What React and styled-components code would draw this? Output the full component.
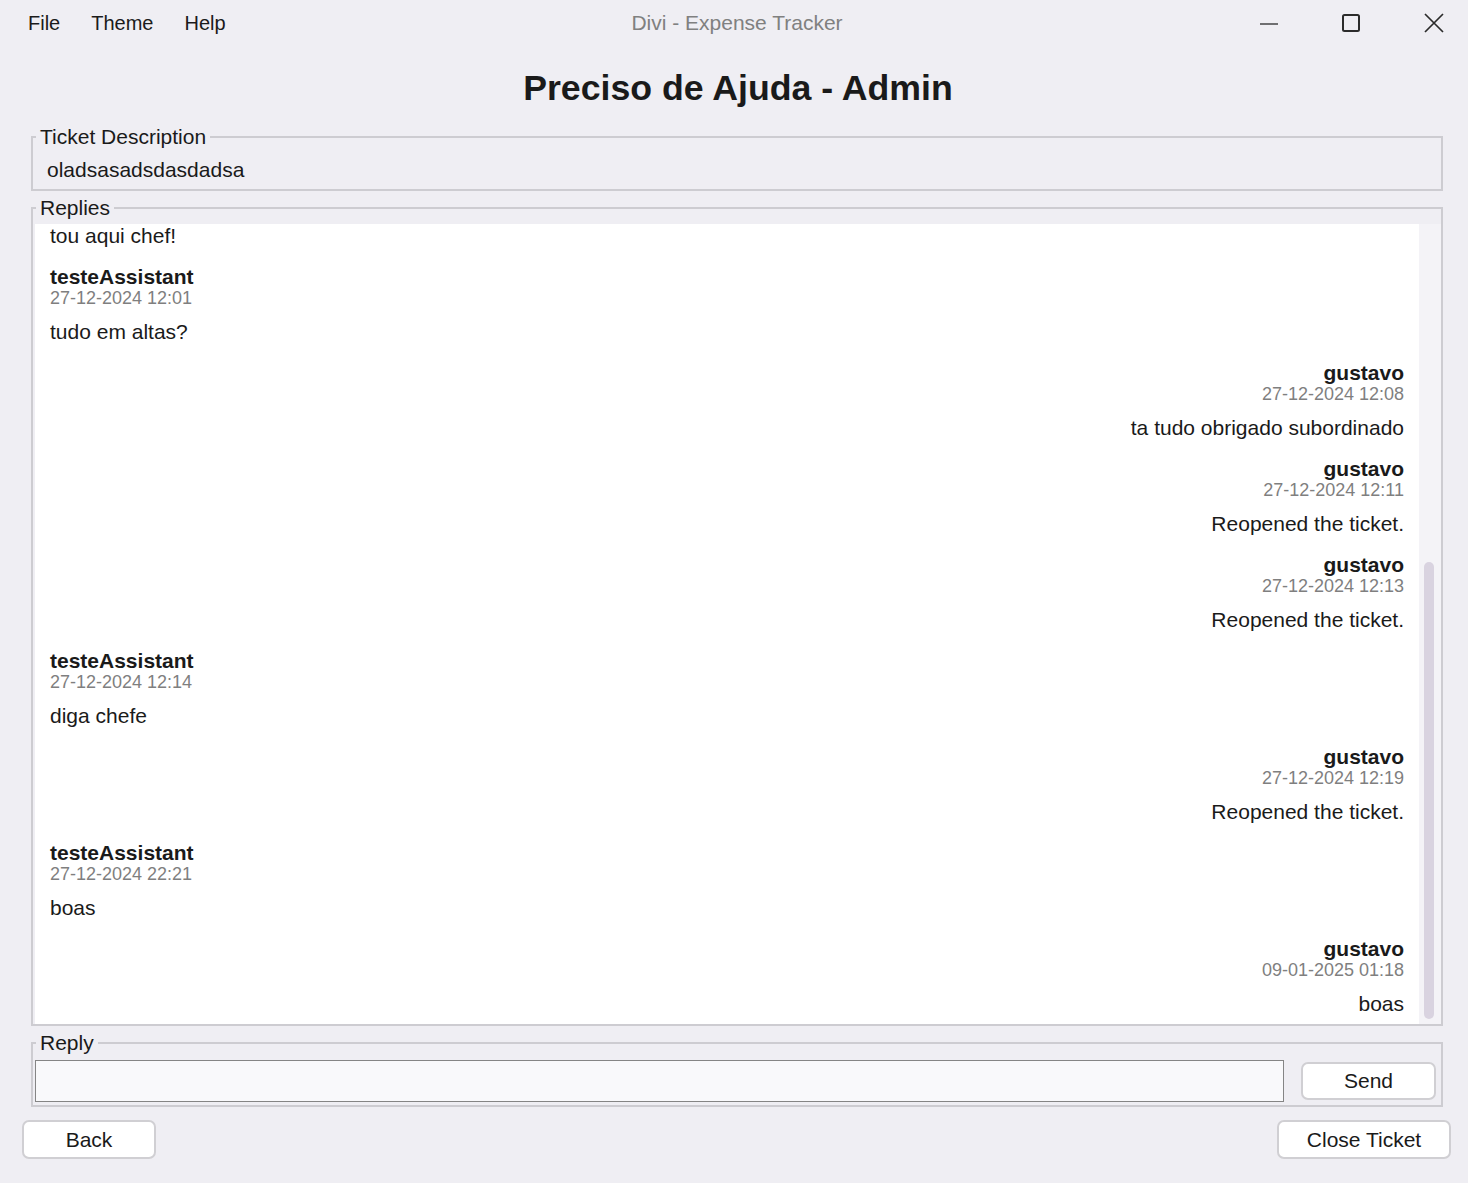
import React from 'react';
import styled, { createGlobalStyle } from 'styled-components';

const GlobalStyle = createGlobalStyle`
  html, body {
    margin: 0;
    padding: 0;
    background: #efeef3;
    font-family: "Liberation Sans", Arial, sans-serif;
    color: #1a1a1a;
  }
`;

const Window = styled.div`
  width: 1468px;
  height: 1183px;
  display: flex;
  flex-direction: column;
  background: #efeef3;
`;

const TitleBar = styled.div`
  height: 46px;
  display: grid;
  grid-template-columns: 1fr auto 1fr;
  align-items: center;
`;

const Menu = styled.div`
  display: flex;
  gap: 31px;
  padding-left: 28px;
  font-size: 20px;
`;

const MenuItem = styled.span`
  color: #1b1b1b;
`;

const WindowTitle = styled.div`
  font-size: 21px;
  color: #808080;
  padding-left: 6px;
`;

const Controls = styled.div`
  display: flex;
  justify-content: flex-end;
  align-items: center;
  gap: 64px;
  padding-right: 24px;
`;

const Heading = styled.h1`
  margin: 22px 0 17px;
  font-size: 35.7px;
  line-height: 40px;
  font-weight: bold;
  text-align: center;
  color: #1a1a1a;
  padding-left: 8px;
`;

const Group = styled.fieldset`
  margin: 0 25px 5px 31px;
  border: 2px solid #cdccd1;
  padding: ${p => p.$pad};
  min-width: 0;
`;

const Legend = styled.legend`
  font-size: 21px;
  line-height: 24px;
  padding: 0 4px;
  margin-left: 1px;
  color: #1a1a1a;
`;

const Description = styled.div`
  font-size: 21px;
  line-height: 24px;
  padding-left: 12px;
`;

const RepliesBody = styled.div`
  display: flex;
  height: 800px;
`;

const List = styled.div`
  flex: 1;
  background: #ffffff;
  padding: 0 15px;
  overflow: hidden;
`;

const Track = styled.div`
  width: 22px;
  background: #f4f3f7;
  display: flex;
  flex-direction: column;
`;

const Thumb = styled.div`
  margin: 338px 0 0 5px;
  width: 10px;
  height: 457px;
  border-radius: 5px;
  background: #d9d3e0;
`;

const Entry = styled.div`
  display: flex;
  flex-direction: column;
  align-items: ${p => (p.$side === 'right' ? 'flex-end' : 'flex-start')};
  text-align: ${p => p.$side};
  padding-bottom: 17px;
`;

const Author = styled.div`
  font-size: 21px;
  line-height: 24px;
  font-weight: bold;
`;

const Stamp = styled.div`
  font-size: 18px;
  line-height: 18px;
  color: #7f7f7f;
`;

const Text = styled.div`
  font-size: 21px;
  line-height: 24px;
  margin-top: ${p => (p.$partial ? '0' : '13px')};
`;

const ReplyRow = styled.div`
  display: flex;
  align-items: center;
  gap: 17px;
`;

const Input = styled.input`
  flex: 1;
  height: 42px;
  box-sizing: border-box;
  border: 1px solid #858585;
  background: #f9f9fb;
  font-family: inherit;
  font-size: 21px;
  padding: 0 8px;
  outline: none;
`;

const Button = styled.button`
  width: ${p => p.$w}px;
  height: ${p => p.$h}px;
  box-sizing: border-box;
  background: #ffffff;
  border: 2px solid #d0cfd3;
  border-radius: 7px;
  font-family: inherit;
  font-size: 21px;
  color: #1a1a1a;
  padding: 0;
`;

const Footer = styled.div`
  display: flex;
  justify-content: space-between;
  padding: 8px 17px 0 22px;
`;

const replies = [
  { side: 'left', text: 'tou aqui chef!', partial: true },
  { side: 'left', name: 'testeAssistant', date: '27-12-2024 12:01', text: 'tudo em altas?' },
  { side: 'right', name: 'gustavo', date: '27-12-2024 12:08', text: 'ta tudo obrigado subordinado' },
  { side: 'right', name: 'gustavo', date: '27-12-2024 12:11', text: 'Reopened the ticket.' },
  { side: 'right', name: 'gustavo', date: '27-12-2024 12:13', text: 'Reopened the ticket.' },
  { side: 'left', name: 'testeAssistant', date: '27-12-2024 12:14', text: 'diga chefe' },
  { side: 'right', name: 'gustavo', date: '27-12-2024 12:19', text: 'Reopened the ticket.' },
  { side: 'left', name: 'testeAssistant', date: '27-12-2024 22:21', text: 'boas' },
  { side: 'right', name: 'gustavo', date: '09-01-2025 01:18', text: 'boas' },
];

const App = () => {
  return (
    <>
      <GlobalStyle />
      <Window>
        <TitleBar>
          <Menu>
            <MenuItem>File</MenuItem>
            <MenuItem>Theme</MenuItem>
            <MenuItem>Help</MenuItem>
          </Menu>
          <WindowTitle>Divi - Expense Tracker</WindowTitle>
          <Controls>
            <svg width="18" height="20" viewBox="0 0 18 20">
              <line x1="0" y1="11" x2="18" y2="11" stroke="#2b2b2b" strokeWidth="1.3" />
            </svg>
            <svg width="18" height="18" viewBox="0 0 18 18">
              <rect x="1" y="1" width="16" height="16" rx="1.5" fill="none" stroke="#2b2b2b" strokeWidth="2" />
            </svg>
            <svg width="20" height="20" viewBox="0 0 20 20">
              <path d="M1 1 L19 19 M19 1 L1 19" stroke="#2b2b2b" strokeWidth="1.7" fill="none" />
            </svg>
          </Controls>
        </TitleBar>

        <Heading>Preciso de Ajuda - Admin</Heading>

        <Group $pad="9px 14px 7px 2px">
          <Legend>Ticket Description</Legend>
          <Description>oladsasadsdasdadsa</Description>
        </Group>

        <Group $pad="4px 0 0 2px">
          <Legend>Replies</Legend>
          <RepliesBody>
            <List>
              {replies.map((r, i) => (
                <Entry key={i} $side={r.side}>
                  {!r.partial && <Author>{r.name}</Author>}
                  {!r.partial && <Stamp>{r.date}</Stamp>}
                  <Text $partial={r.partial}>{r.text}</Text>
                </Entry>
              ))}
            </List>
            <Track>
              <Thumb />
            </Track>
          </RepliesBody>
        </Group>

        <Group $pad="5px 5px 3px 2px">
          <Legend>Reply</Legend>
          <ReplyRow>
            <Input />
            <Button $w={135} $h={38}>Send</Button>
          </ReplyRow>
        </Group>

        <Footer>
          <Button $w={134} $h={39}>Back</Button>
          <Button $w={174} $h={39}>Close Ticket</Button>
        </Footer>
      </Window>
    </>
  );
};

export default App;
